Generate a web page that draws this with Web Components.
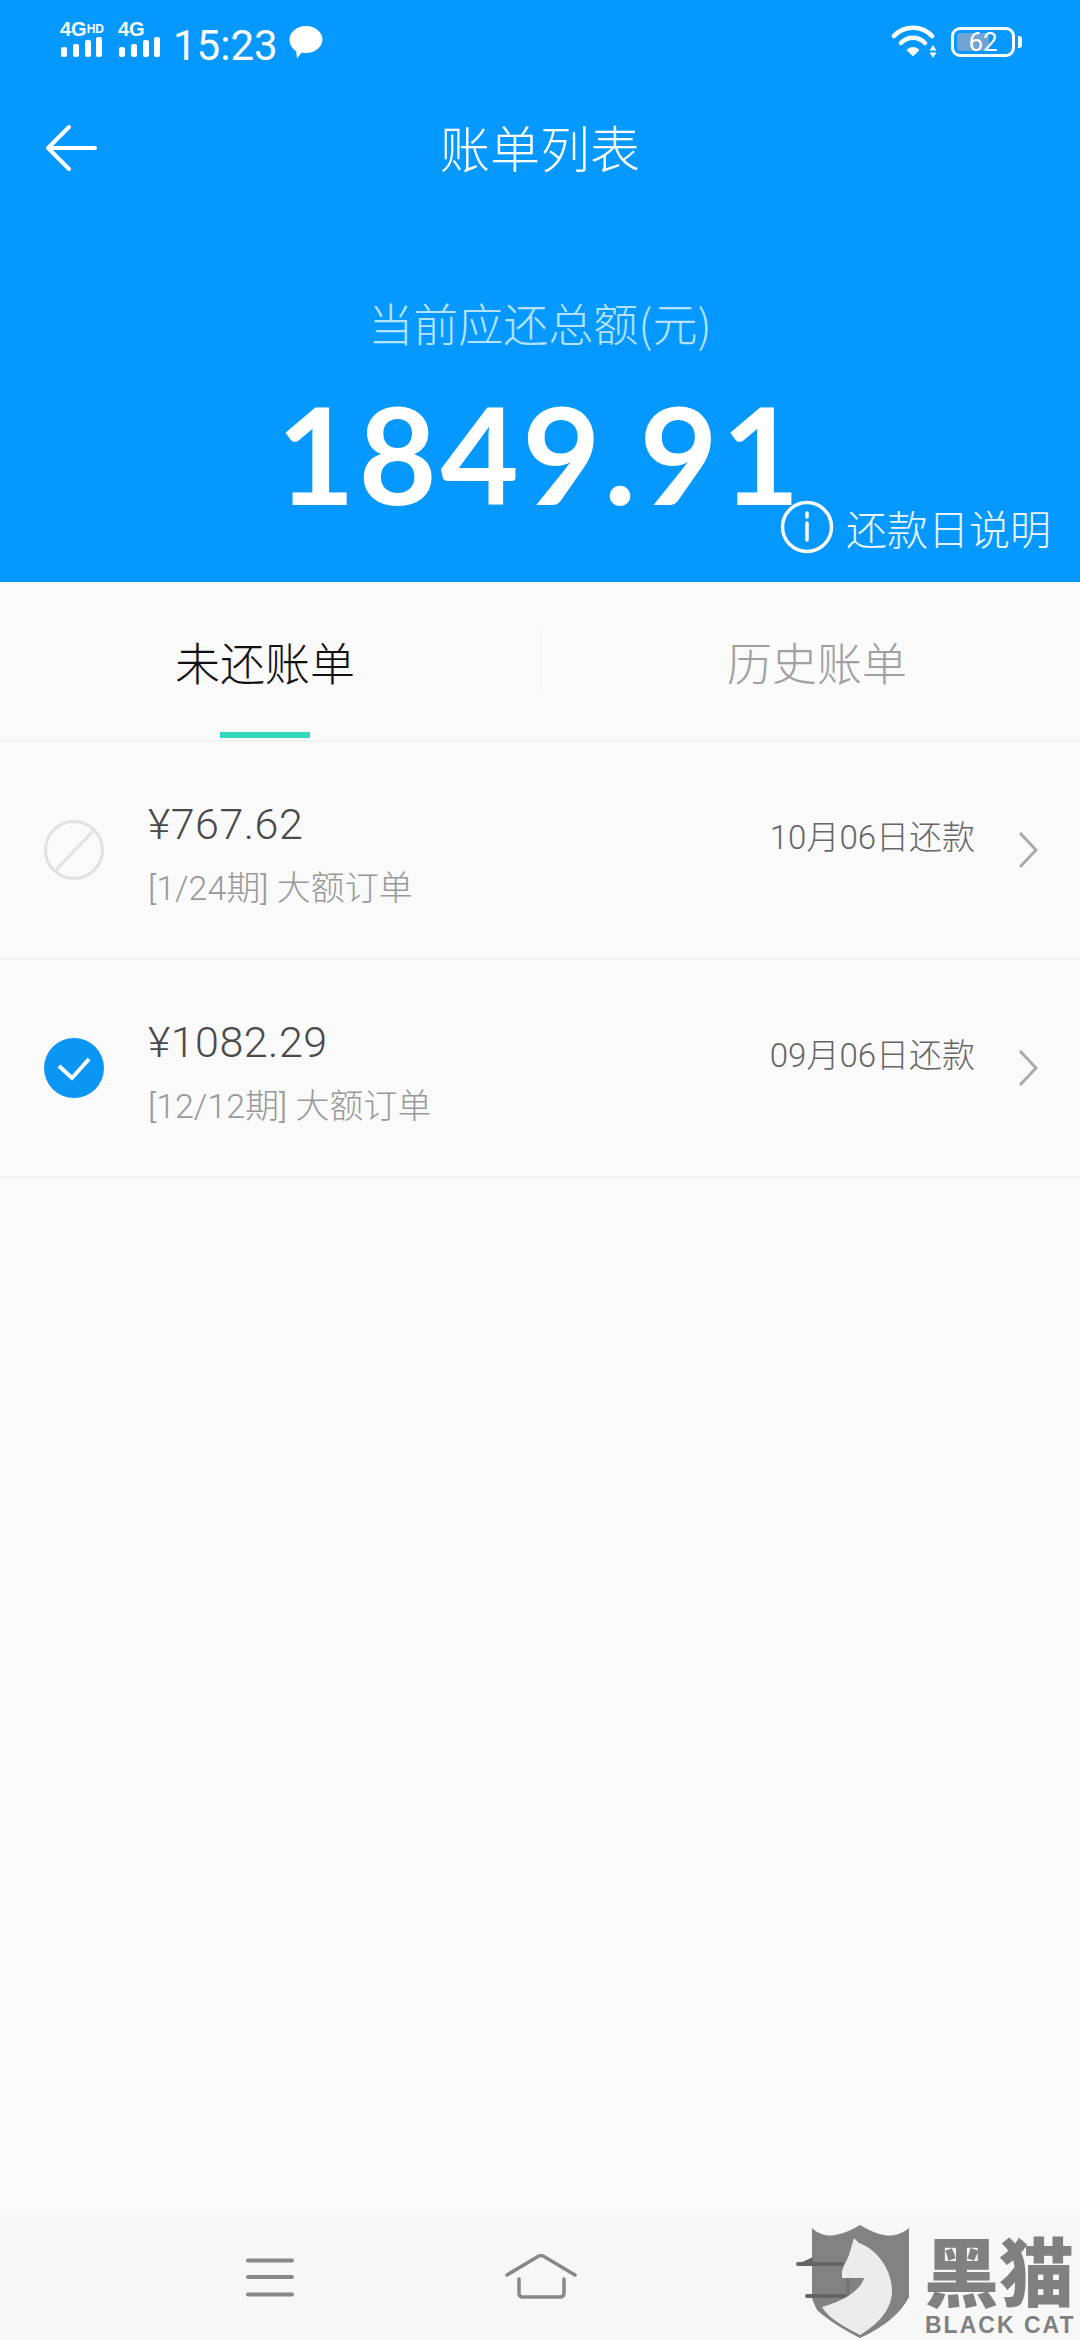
<!DOCTYPE html>
<html lang="zh">
<head>
<meta charset="utf-8">
<title>账单列表</title>
<style>
  html, body { margin: 0; padding: 0; height: 100%; }
  body { width: 1080px; height: 2340px; overflow: hidden; background: #fafafa; font-family: "Noto Sans CJK SC", Roboto, sans-serif; display: flex; flex-direction: column; position: relative; }
</style>
</head>
<body>
  <status-bar></status-bar>
  <bill-header amount="1849.91"></bill-header>
  <bill-tabs></bill-tabs>
  <bill-row amount="¥767.62" term="[1/24期] 大额订单" due="10月06日还款"></bill-row>
  <bill-row amount="¥1082.29" term="[12/12期] 大额订单" due="09月06日还款" checked></bill-row>
  <div style="flex:1"></div>
  <nav-bar></nav-bar>
  <cat-mark></cat-mark>

<script>
const FONT = `Roboto, "Noto Sans CJK SC", sans-serif`;
const BLUE = '#0599ff';

class StatusBar extends HTMLElement {
  constructor() {
    super();
    this.attachShadow({ mode: 'open' });
  }

  connectedCallback() {
    let bars = `<rect x="1" y="10" width="6" height="10" rx="2"/><rect x="13" y="7" width="6" height="13" rx="2"/><rect x="25" y="3" width="6" height="17" rx="2"/><rect x="36" y="0" width="6" height="20" rx="2"/>`;
    this.shadowRoot.innerHTML = `
      <style>
        :host { display: flex; align-items: flex-start; justify-content: space-between; height: 90px; background: ${BLUE}; color: #fff; font-family: ${FONT}; }
        .left { display: flex; align-items: flex-start; padding: 21px 0 0 60px; }
        .sig { width: 45px; height: 37px; display: flex; flex-direction: column; font: 700 20px/16px "Liberation Sans", sans-serif; white-space: nowrap; }
        .sig + .sig { margin-left: 13px; }
        .sig svg { display: block; }
        .sig sup { font-size: 12px; line-height: 10px; vertical-align: 3px; }
        .time { font-size: 42px; line-height: 50px; margin: 0 0 0 10px; }
        .msg { margin: 5px 0 0 11px; display: block; }
        .right { display: flex; align-items: flex-start; padding: 25px 0 0 0; margin-right: 65px; }
        .batt { width: 64px; height: 30px; box-sizing: border-box; margin: 2px 0 0 12px; border: 3px solid #fff; border-radius: 9px; position: relative; font-size: 26px; line-height: 24px; text-align: center; }
        .batt i { position: absolute; left: 3px; top: 3px; bottom: 3px; width: 32px; background: #6fa3d4; border-radius: 3px 0 0 3px; }
        .batt span { position: relative; }
        .batt::after { content: ""; position: absolute; right: -10px; top: 6px; width: 4px; height: 12px; background: #fff; border-radius: 0 3px 3px 0; }
      </style>
      <div class="left">
        <div class="sig"><span>4G<sup>HD</sup></span><svg width="45" height="20" viewBox="0 0 45 20" fill="#fff">${bars}</svg></div>
        <div class="sig"><span>4G</span><svg width="45" height="20" viewBox="0 0 45 20" fill="#fff">${bars}</svg></div>
        <span class="time">15:23</span>
        <svg class="msg" width="34" height="33" viewBox="0 0 34 33" fill="#fff"><path d="M17 0c9 0 16.500 6 16.500 13.500S26 27 17 27c-1.500 0-3-.2-4.300-.6L8 32.500l-.8-7.300C3 22.700.500 18.500.500 13.500.500 6 8 0 17 0z"/></svg>
      </div>
      <div class="right">
        <svg width="48" height="34" viewBox="0 0 48 34" fill="none" stroke="#fff" stroke-width="4.500" stroke-linecap="round">
          <path d="M3 11C13 0 31 0 41 11"/><path d="M10 18c7-7 17-7 24 0"/>
          <path d="M17 25c3-2.500 7-2.500 10 0l-5 5z" fill="#fff" stroke-width="2"/>
          <path d="M42 20l3.500 5.500h-7zM38.500 27.500h7l-3.500 5.500z" fill="#fff" stroke="none"/>
        </svg>
        <div class="batt"><i></i><span>62</span></div>
      </div>
    `;
  }
}

class BillHeader extends HTMLElement {
  constructor() {
    super();
    this.attachShadow({ mode: 'open' });
  }

  connectedCallback() {
    let amount = this.getAttribute('amount') || '0.00';
    this.shadowRoot.innerHTML = `
      <style>
        :host { display: block; height: 492px; background: ${BLUE}; color: #fff; font-family: "Noto Sans CJK SC", sans-serif; position: relative; }
        .bar { display: flex; align-items: center; justify-content: center; height: 60px; margin-top: 26px; position: relative; }
        .bar svg { position: absolute; left: 45px; top: 8px; }
        .title { font-size: 50px; font-weight: 300; line-height: 60px; }
        .sub { text-align: center; font-size: 45px; font-weight: 300; line-height: 60px; color: #b5e2ff; margin-top: 117px; }
        .num { text-align: center; font: 700 135px/130px Lato, Roboto, sans-serif; margin-top: 35px; letter-spacing: 3.500px; }
        .help { position: absolute; right: 29px; bottom: 28px; display: flex; align-items: center; gap: 12px; font-size: 41px; font-weight: 300; line-height: 54px; color: #eaf6ff; }
      </style>
      <div class="bar">
        <svg width="52" height="48" viewBox="0 0 52 48" fill="none" stroke="#fff" stroke-width="4" stroke-linecap="round" stroke-linejoin="round"><path d="M24 3L3 24l21 21M3 24h47"/></svg>
        <span class="title">账单列表</span>
      </div>
      <div class="sub">当前应还总额(元)</div>
      <div class="num">${amount}</div>
      <div class="help">
        <svg width="54" height="54" viewBox="0 0 54 54" fill="none" stroke="#fff" stroke-width="3.500"><circle cx="27" cy="27" r="24.500"/><path d="M27 23v17M27 13v4" stroke-linecap="round"/></svg>
        <span>还款日说明</span>
      </div>
    `;
  }
}

class BillTabs extends HTMLElement {
  constructor() {
    super();
    this.attachShadow({ mode: 'open' });
  }

  connectedCallback() {
    this.shadowRoot.innerHTML = `
      <style>
        :host { display: grid; grid-template-columns: 541px 1px 1fr; height: 160px; box-sizing: border-box; background: #fafafa; border-bottom: 2px solid #f1f1f1; font-family: "Noto Sans CJK SC", sans-serif; font-size: 45px; font-weight: 300; position: relative; }
        .tab { display: flex; align-items: center; justify-content: center; box-sizing: border-box; height: 158px; color: #a0a0a0; }
        .on { color: #111; padding-right: 11px; position: relative; }
        .on::after { content: ""; position: absolute; left: 220px; bottom: 2px; width: 90px; height: 6px; background: #33d9bb; }
        .off { padding-left: 12px; }
        .sep { width: 1px; height: 63px; background: #f0f0f0; margin-top: 48px; }
      </style>
      <div class="tab on">未还账单</div>
      <div class="sep"></div>
      <div class="tab off">历史账单</div>
    `;
  }
}

class BillRow extends HTMLElement {
  constructor() {
    super();
    this.attachShadow({ mode: 'open' });
  }

  connectedCallback() {
    let checked = this.hasAttribute('checked');
    let mark = checked
      ? `<svg width="60" height="60" viewBox="0 0 60 60"><circle cx="30" cy="30" r="30" fill="#0a96f5"/><path d="M15 28l13 12 17-19" fill="none" stroke="#fff" stroke-width="4"/></svg>`
      : `<svg width="60" height="60" viewBox="0 0 60 60" fill="none" stroke="#e2e2e2" stroke-width="3"><circle cx="30" cy="30" r="28.500"/><path d="M11 51L49 11"/></svg>`;
    this.shadowRoot.innerHTML = `
      <style>
        :host { display: flex; align-items: center; height: 218px; box-sizing: border-box; background: #fafafa; border-bottom: 2px solid #f1f1f1; font-family: ${FONT}; position: relative; }
        .mark { width: 60px; height: 60px; margin-left: 44px; flex: none; }
        .mid { margin-left: 44px; flex: 1; padding-top: 9px; }
        .amt { font-size: 43px; line-height: 50px; color: #4a4a4a; font-weight: 300; letter-spacing: .5px; }
        .term { font-size: 34px; line-height: 44px; color: #999; margin-top: 17px; font-weight: 300; }
        .due { font-size: 33px; color: #666; font-weight: 300; line-height: 44px; align-self: flex-start; margin-top: 74px; }
        .chev { margin: 0 42px 0 43px; flex: none; }
      </style>
      <div class="mark">${mark}</div>
      <div class="mid">
        <div class="amt">${this.getAttribute('amount')}</div>
        <div class="term">${this.getAttribute('term')}</div>
      </div>
      <div class="due">${this.getAttribute('due')}</div>
      <svg class="chev" width="20" height="36" viewBox="0 0 20 36" fill="none" stroke="#aaa" stroke-width="3"><path d="M2 1l16 17L2 35"/></svg>
    `;
  }
}

class NavBar extends HTMLElement {
  constructor() {
    super();
    this.attachShadow({ mode: 'open' });
  }

  connectedCallback() {
    this.shadowRoot.innerHTML = `
      <style>
        :host { display: flex; align-items: center; height: 127px; background: #f7f7f7; box-sizing: border-box; }
        svg { display: block; flex: none; }
        .menu { margin-left: 244px; }
        .home { margin-left: 209px; }
        .back { margin-left: 219px; }
      </style>
      <svg class="menu" width="52" height="42" viewBox="0 0 52 42" stroke="#888" stroke-width="4" stroke-linecap="round"><path d="M4 4.500h44M4 21h44M4 38.500h44"/></svg>
      <svg class="home" width="72" height="46" viewBox="0 0 72 46" fill="none" stroke="#888" stroke-width="3.500" stroke-linecap="round" stroke-linejoin="round"><path d="M2 21L33 2.500q3-2 6 0L70 21M14 25v14q0 4 4 4h37q4 0 4-4V25"/></svg>
      <svg class="back" width="56" height="42" viewBox="0 0 56 42" fill="none"><path d="M2 8L17 1v7z" fill="#666"/><path d="M2 8h44M11 40h39" stroke="#666" stroke-width="4" stroke-linecap="round"/><path d="M52 10v28q0 2-2 2" stroke="#aaa" stroke-width="3"/></svg>
    `;
  }
}

class CatMark extends HTMLElement {
  constructor() {
    super();
    this.attachShadow({ mode: 'open' });
  }

  connectedCallback() {
    this.shadowRoot.innerHTML = `
      <style>
        :host { display: block; position: absolute; left: 812px; top: 2225px; width: 268px; height: 115px; color: #808080; }
        svg { position: absolute; left: 0; top: 0; }
        .zh { position: absolute; left: 112px; top: 8px; font: 900 75px/72px "Noto Sans CJK SC", sans-serif; white-space: nowrap; }
        .en { position: absolute; left: 113px; top: 88px; font: 700 23px/24px "Liberation Sans", sans-serif; white-space: nowrap; letter-spacing: 2px; }
      </style>
      <svg width="98" height="114" viewBox="0 0 98 114">
        <path d="M0 3c6 6 16 9 23 7 11-2 18-6 25-10 7 4 14 8 24 10 8 2 18-1 25-7v69C88 90 68 104 48 113 30 104 12 92 5 85 2 78 0 75 0 72z" fill="#646464" fill-opacity=".8"/>
        <path d="M42 13l5 5c18 6 33 27 33 48 0 19-15 34-32 44C35 103 18 95 10 82c15-4 38-14 42-29H30v-7c3-8 6-13 7-16z" fill="#fff" fill-opacity=".85"/>
      </svg>
      <div class="zh">黑猫</div>
      <div class="en">BLACK CAT</div>
    `;
  }
}

customElements.define('status-bar', StatusBar);
customElements.define('bill-header', BillHeader);
customElements.define('bill-tabs', BillTabs);
customElements.define('bill-row', BillRow);
customElements.define('nav-bar', NavBar);
customElements.define('cat-mark', CatMark);
</script>
</body>
</html>
